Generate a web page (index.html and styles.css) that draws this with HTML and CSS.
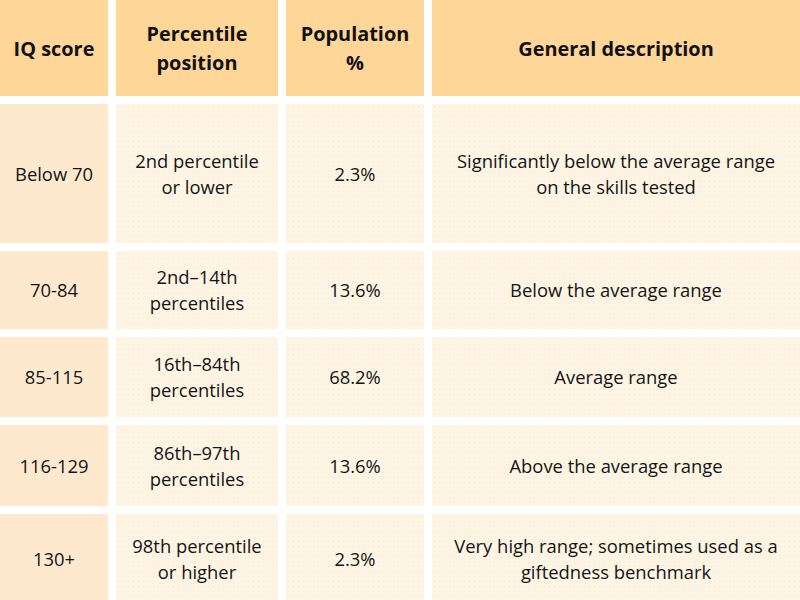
FILE: index.html
```html
<!DOCTYPE html>
<html lang="en">
<head>
<meta charset="utf-8">
<title>IQ score table</title>
<link rel="stylesheet" href="styles.css">
</head>
<body>
<div class="iq-table">
  <div class="cell head">IQ score</div>
  <div class="cell head">Percentile<br>position</div>
  <div class="cell head">Population<br>%</div>
  <div class="cell head">General description</div>

  <div class="cell score">Below 70</div>
  <div class="cell body">2nd percentile<br>or lower</div>
  <div class="cell body">2.3%</div>
  <div class="cell body">Significantly below the average range<br>on the skills tested</div>

  <div class="cell score">70-84</div>
  <div class="cell body">2nd–14th<br>percentiles</div>
  <div class="cell body">13.6%</div>
  <div class="cell body">Below the average range</div>

  <div class="cell score">85-115</div>
  <div class="cell body">16th–84th<br>percentiles</div>
  <div class="cell body">68.2%</div>
  <div class="cell body">Average range</div>

  <div class="cell score">116-129</div>
  <div class="cell body">86th–97th<br>percentiles</div>
  <div class="cell body">13.6%</div>
  <div class="cell body">Above the average range</div>

  <div class="cell score">130+</div>
  <div class="cell body">98th percentile<br>or higher</div>
  <div class="cell body">2.3%</div>
  <div class="cell body">Very high range; sometimes used as a<br>giftedness benchmark</div>
</div>
</body>
</html>
```

FILE: styles.css
```css
html, body {
  margin: 0;
  padding: 0;
  background: #ffffff;
}

body {
  font-family: "Open Sans", "Noto Sans", sans-serif;
  color: #141414;
  overflow: hidden;
}

.iq-table {
  display: grid;
  grid-template-columns: 108px 162px 138px 1fr;
  grid-template-rows: 96px 139px 78px 80px 81px 90px;
  gap: 8px;
  width: 800px;
}

.cell {
  display: flex;
  align-items: center;
  justify-content: center;
  text-align: center;
  font-size: 18.4px;
  line-height: 26px;
}

.head {
  background: #fed698;
  font-weight: 700;
  font-size: 19.9px;
  line-height: 29px;
  color: #111111;
}

.score {
  background: #fee9cf;
}

.body {
  background-color: #fef4e4;
  background-image: radial-gradient(circle, rgba(235, 205, 160, 0.28) 0.6px, transparent 1px);
  background-size: 5px 5px;
}
```
